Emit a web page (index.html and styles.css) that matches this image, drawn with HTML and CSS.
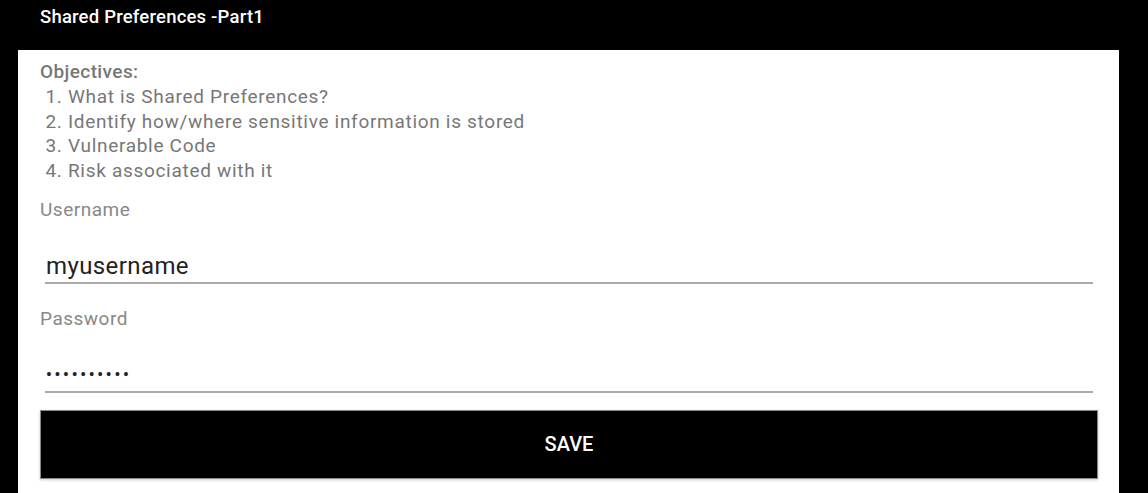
FILE: index.html
```html
<!DOCTYPE html>
<html lang="en">
<head>
  <meta charset="UTF-8">
  <meta name="viewport" content="width=device-width, initial-scale=1.0">
  <title>Shared Preferences -Part1</title>
  <link rel="stylesheet" href="styles.css">
</head>
<body>
  <!-- title bar -->
  <div class="header">Shared Preferences -Part1</div>

  <!-- content -->
  <div class="panel">
    <div class="objectives">
      <h2>Objectives:</h2>
      <p>&nbsp;1. What is Shared Preferences?</p>
      <p>&nbsp;2. Identify how/where sensitive information is stored</p>
      <p>&nbsp;3. Vulnerable Code</p>
      <p>&nbsp;4. Risk associated with it</p>
    </div>

    <div class="field first">
      <label>Username</label>
      <div class="input">myusername</div>
    </div>

    <div class="field">
      <label>Password</label>
      <div class="input dots">&bull;&bull;&bull;&bull;&bull;&bull;&bull;&bull;&bull;&bull;</div>
    </div>

    <button class="save-btn">SAVE</button>
  </div>
</body>
</html>
```

FILE: styles.css
```css
/* general */
* {
  margin: 0;
  padding: 0;
  box-sizing: border-box;
}

body {
  font-family: Roboto, 'Noto Sans', sans-serif;
  background: #000;
  height: 493px;
  overflow: hidden;
}

/* title bar */
.header {
  color: #fff;
  font-size: 18.5px;
  font-weight: 500;
  letter-spacing: 0.2px;
  height: 50px;
  padding: 6px 0 0 40px;
}

/* white panel */
.panel {
  background: #fff;
  margin-left: 18px;
  width: 1101px;
  height: 443px;
  padding: 10px 21px 0 22px;
}

.objectives {
  color: #777;
  font-size: 19px;
  letter-spacing: 0.7px;
  line-height: 24.8px;
}

.objectives h2 {
  font-size: 19px;
  font-weight: 500;
  letter-spacing: 0.4px;
}

/* inputs */
.field {
  margin-top: 23px;
}

.field.first {
  margin-top: 14px;
}

.field label {
  display: block;
  color: #888;
  font-size: 19px;
  letter-spacing: 0.5px;
  line-height: 24px;
}

.field .input {
  margin: 29px 5px 0 5px;
  padding: 0 0 1px 1px;
  color: #222;
  font-size: 24px;
  letter-spacing: 0.4px;
  line-height: 30px;
  border-bottom: 2px solid #aaa;
}

.field .dots {
  font-size: 16px;
  font-weight: bold;
  letter-spacing: 2.8px;
}

/* button */
.save-btn {
  display: block;
  width: 100%;
  height: 69px;
  margin-top: 17px;
  background: #000;
  color: #fff;
  border: 1px solid #888;
  font-family: inherit;
  font-size: 20px;
  font-weight: 500;
  box-shadow: 0 1px 3px rgba(0, 0, 0, 0.2);
}
```
